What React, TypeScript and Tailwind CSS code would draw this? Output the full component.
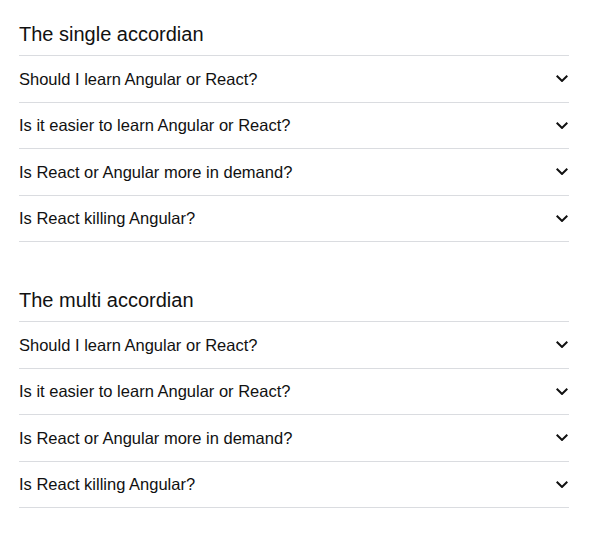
const questions = [
  "Should I learn Angular or React?",
  "Is it easier to learn Angular or React?",
  "Is React or Angular more in demand?",
  "Is React killing Angular?",
];

function Chevron() {
  return (
    <svg width="12" height="7.4" viewBox="6 8.59 12 7.41" className="mr-px shrink-0" fill="#111">
      <path d="M16.59 8.59L12 13.17 7.41 8.59 6 10l6 6 6-6z" />
    </svg>
  );
}

function Accordion({ title }: { title: string }) {
  return (
    <div className="mb-6">
      <h2 className="border-b border-[#dadce0] pb-[9px] pt-[23px] text-[20px] leading-[23px] font-normal">
        {title}
      </h2>
      {questions.map((q) => (
        <button
          key={q}
          className="flex w-full items-center justify-between border-b border-[#dadce0] py-[13.5px] text-left text-[16.5px] leading-[18.5px]"
        >
          <span>{q}</span>
          <Chevron />
        </button>
      ))}
    </div>
  );
}

export default function App() {
  return (
    <div className="min-h-[541px] bg-white px-[19px] font-['Liberation_Sans',Arial,sans-serif] text-[#111]">
      <div className="w-[550px]">
        <Accordion title="The single accordian" />
        <Accordion title="The multi accordian" />
      </div>
    </div>
  );
}
